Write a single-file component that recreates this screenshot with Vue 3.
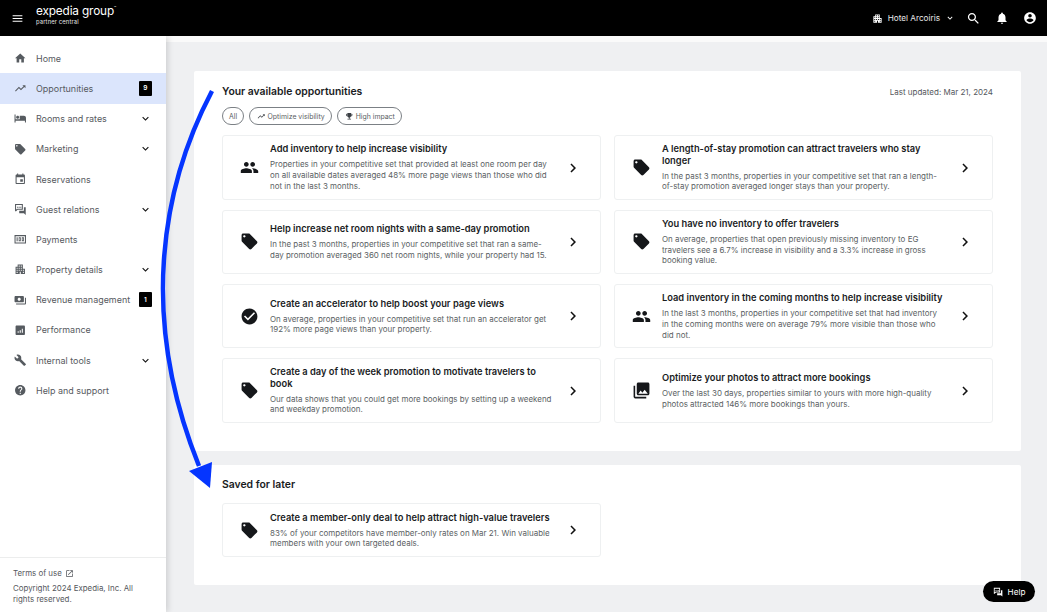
<template>
  <div class="page">
    <header class="topbar">
      <svg class="menu-icon" viewBox="0 0 24 24"><path :d="icons.menu" /></svg>
      <div class="logo">
        <div class="logo-main">expedia group<sup>™</sup></div>
        <div class="logo-sub">partner central</div>
      </div>
      <div class="top-right">
        <svg class="hotel-icon" viewBox="0 0 24 24"><path :d="icons.building" /></svg>
        <span class="hotel-name">Hotel Arcoiris</span>
        <svg class="hotel-caret" viewBox="0 0 24 24"><path :d="icons.expand" /></svg>
        <svg class="top-icon search" viewBox="0 0 24 24"><path :d="icons.search" /></svg>
        <svg class="top-icon bell" viewBox="0 0 24 24"><path :d="icons.bell" /></svg>
        <svg class="top-icon" viewBox="0 0 24 24"><path :d="icons.account" /></svg>
      </div>
    </header>

    <div class="body">
      <aside class="sidebar">
        <nav class="nav">
          <div v-for="item in navItems" :key="item.label" :class="['nav-item', { active: item.active }]">
            <svg class="nav-icon" viewBox="0 0 24 24"><path :d="icons[item.icon]" /></svg>
            <span class="nav-label">{{ item.label }}</span>
            <span v-if="item.badge" class="nav-badge">{{ item.badge }}</span>
            <svg v-if="item.expand" class="nav-caret" viewBox="0 0 24 24"><path :d="icons.expand" /></svg>
          </div>
        </nav>
        <div class="side-foot">
          <div class="terms">
            Terms of use
            <svg viewBox="0 0 24 24"><path :d="icons.external" /></svg>
          </div>
          <div class="copyright">Copyright 2024 Expedia, Inc. All rights reserved.</div>
        </div>
      </aside>

      <main class="main">
        <section class="panel">
          <div class="panel-head">
            <h2>Your available opportunities</h2>
            <span class="updated">Last updated: Mar 21, 2024</span>
          </div>
          <div class="pills">
            <span class="pill">All</span>
            <span class="pill">
              <svg viewBox="0 0 24 24"><path :d="icons.trend" /></svg>
              Optimize visibility
            </span>
            <span class="pill">
              <svg viewBox="0 0 24 24"><path :d="icons.trophy" /></svg>
              High impact
            </span>
          </div>
          <div class="opp-grid">
            <div v-for="opp in opportunities" :key="opp.title" class="opp">
              <svg class="opp-icon" viewBox="0 0 24 24"><path :d="icons[opp.icon]" /></svg>
              <div class="opp-text">
                <h3>{{ opp.title }}</h3>
                <p>{{ opp.text }}</p>
              </div>
              <svg class="opp-chevron" viewBox="0 0 24 24"><path :d="icons.chevron" /></svg>
            </div>
          </div>
        </section>

        <section class="panel saved">
          <h2>Saved for later</h2>
          <div class="opp-grid">
            <div class="opp">
              <svg class="opp-icon" viewBox="0 0 24 24"><path :d="icons.tag" /></svg>
              <div class="opp-text">
                <h3>Create a member-only deal to help attract high-value travelers</h3>
                <p>83% of your competitors have member-only rates on Mar 21. Win valuable members with your own targeted deals.</p>
              </div>
              <svg class="opp-chevron" viewBox="0 0 24 24"><path :d="icons.chevron" /></svg>
            </div>
          </div>
        </section>
      </main>
    </div>

    <!-- hand drawn annotation arrow over the page -->
    <svg class="arrow" viewBox="0 0 1047 612">
      <path d="M212 91 C 160 190, 140 320, 199 466" fill="none" stroke="#0535ff" stroke-width="4.5" />
      <polygon points="189,471 212,462 210,488" fill="#0535ff" />
    </svg>

    <div class="help-btn">
      <svg viewBox="0 0 24 24"><path :d="icons.guest" /></svg>
      Help
    </div>
  </div>
</template>

<script setup>
const icons = {
  menu: 'M3 18h18v-2H3v2zm0-5h18v-2H3v2zm0-7v2h18V6H3z',
  home: 'M10 20v-6h4v6h5v-8h3L12 3 2 12h3v8z',
  trend: 'M16 6l2.29 2.29-4.88 4.88-4-4L2 16.59 3.41 18l6-6 4 4 6.3-6.29L22 12V6z',
  bed: 'M7 13c1.66 0 3-1.34 3-3S8.66 7 7 7s-3 1.34-3 3 1.34 3 3 3zm12-6h-8v7H3V5H1v15h2v-3h18v3h2v-9c0-2.21-1.79-4-4-4z',
  tag: 'M21.41 11.58l-9-9C12.05 2.22 11.55 2 11 2H4c-1.1 0-2 .9-2 2v7c0 .55.22 1.05.59 1.42l9 9c.36.36.86.58 1.41.58.55 0 1.05-.22 1.41-.59l7-7c.37-.36.59-.86.59-1.41 0-.55-.23-1.06-.59-1.42zM5.5 7C4.67 7 4 6.33 4 5.5S4.67 4 5.5 4 7 4.67 7 5.5 6.33 7 5.5 7z',
  event: 'M17 12h-5v5h5v-5zM16 1v2H8V1H6v2H5c-1.11 0-1.99.9-1.99 2L3 19c0 1.1.89 2 2 2h14c1.1 0 2-.9 2-2V5c0-1.1-.9-2-2-2h-1V1h-2zm3 18H5V8h14v11z',
  guest: 'M2 2h15v11H7l-3 3H2zM4 4v8.5L6.5 11H15V4zM6 7h2v2H6zM9 7h2v2H9zM12 7h2v2h-2zM10 15h9V8h3.5v15L19 19.5h-9z',
  money: 'M1 4h22v16H1zM3 6v12h18V6zM5 8h2v8H5zM9 8h4v8H9zM10.5 10v4h1v-4zM15 8h4v8h-4zM16.5 10v4h1v-4z',
  building: 'M17 11V3H7v4H3v14h8v-4h2v4h8V11h-4zM7 19H5v-2h2v2zm0-4H5v-2h2v2zm0-4H5V9h2v2zm4 4H9v-2h2v2zm0-4H9V9h2v2zm0-4H9V5h2v2zm4 8h-2v-2h2v2zm0-4h-2V9h2v2zm0-4h-2V5h2v2zm4 12h-2v-2h2v2zm0-4h-2v-2h2v2z',
  revenue: 'M19 14V6c0-1.1-.9-2-2-2H3c-1.1 0-2 .9-2 2v8c0 1.1.9 2 2 2h14c1.1 0 2-.9 2-2zm-9-1c-1.66 0-3-1.34-3-3s1.34-3 3-3 3 1.34 3 3-1.34 3-3 3zm13-6v11c0 1.1-.9 2-2 2H4v-2h17V7h2z',
  chart: 'M19 3H5c-1.1 0-2 .9-2 2v14c0 1.1.9 2 2 2h14c1.1 0 2-.9 2-2V5c0-1.1-.9-2-2-2zM9 17H7v-3h2v3zm4 0h-2v-5h2v5zm4 0h-2V9h2v8z',
  wrench: 'M22.7 19l-9.1-9.1c.9-2.3.4-5-1.5-6.9-2-2-5-2.4-7.4-1.3L9 6 6 9 1.6 4.7C.4 7.1.9 10.1 2.9 12.1c1.9 1.9 4.6 2.4 6.9 1.5l9.1 9.1c.4.4 1 .4 1.4 0l2.3-2.3c.5-.4.5-1.1.1-1.4z',
  help: 'M12 2C6.48 2 2 6.48 2 12s4.48 10 10 10 10-4.48 10-10S17.52 2 12 2zm1 17h-2v-2h2v2zm2.07-7.75l-.9.92C13.45 12.9 13 13.5 13 15h-2v-.5c0-1.1.45-2.1 1.17-2.83l1.24-1.26c.37-.36.59-.86.59-1.41 0-1.1-.9-2-2-2s-2 .9-2 2H8c0-2.21 1.79-4 4-4s4 1.79 4 4c0 .88-.36 1.68-.93 2.25z',
  expand: 'M16.59 8.59L12 13.17 7.41 8.59 6 10l6 6 6-6z',
  chevron: 'M10 6L8.59 7.41 13.17 12l-4.58 4.59L10 18l6-6z',
  people: 'M16 11c1.66 0 2.99-1.34 2.99-3S17.66 5 16 5c-1.66 0-3 1.34-3 3s1.34 3 3 3zm-8 0c1.66 0 2.99-1.34 2.99-3S9.66 5 8 5C6.34 5 5 6.34 5 8s1.34 3 3 3zm0 2c-2.33 0-7 1.17-7 3.5V19h14v-2.5c0-2.33-4.67-3.5-7-3.5zm8 0c-.29 0-.62.02-.97.05 1.16.84 1.97 1.97 1.97 3.45V19h6v-2.5c0-2.33-4.67-3.5-7-3.5z',
  check: 'M12 2C6.48 2 2 6.48 2 12s4.48 10 10 10 10-4.48 10-10S17.52 2 12 2zm-2 15l-5-5 1.41-1.41L10 14.17l7.59-7.59L19 8l-9 9z',
  photos: 'M22 16V4c0-1.1-.9-2-2-2H8c-1.1 0-2 .9-2 2v12c0 1.1.9 2 2 2h12c1.1 0 2-.9 2-2zm-11-4l2.03 2.71L16 11l4 5H8l3-4zM2 6v14c0 1.1.9 2 2 2h14v-2H4V6H2z',
  search: 'M15.5 14h-.79l-.28-.27C15.41 12.59 16 11.11 16 9.5 16 5.91 13.09 3 9.5 3S3 5.91 3 9.5 5.91 16 9.5 16c1.61 0 3.09-.59 4.23-1.57l.27.28v.79l5 4.99L20.49 19l-4.99-5zm-6 0C7.01 14 5 11.99 5 9.5S7.01 5 9.5 5 14 7.01 14 9.5 11.99 14 9.5 14z',
  bell: 'M12 22c1.1 0 2-.9 2-2h-4c0 1.1.89 2 2 2zm6-6v-5c0-3.07-1.64-5.64-4.5-6.32V4c0-.83-.67-1.5-1.5-1.5s-1.5.67-1.5 1.5v.68C7.63 5.36 6 7.92 6 11v5l-2 2v1h16v-1l-2-2z',
  account: 'M12 2C6.48 2 2 6.48 2 12s4.48 10 10 10 10-4.48 10-10S17.52 2 12 2zm0 3c1.66 0 3 1.34 3 3s-1.34 3-3 3-3-1.34-3-3 1.34-3 3-3zm0 14.2c-2.5 0-4.71-1.28-6-3.22.03-1.99 4-3.08 6-3.08 1.99 0 5.97 1.09 6 3.08-1.29 1.94-3.5 3.22-6 3.22z',
  trophy: 'M19 5h-2V3H7v2H5c-1.1 0-2 .9-2 2v1c0 2.55 1.92 4.63 4.39 4.94.63 1.5 1.98 2.63 3.61 2.96V19H7v2h10v-2h-4v-3.1c1.63-.33 2.98-1.46 3.61-2.96C19.08 12.63 21 10.55 21 8V7c0-1.1-.9-2-2-2zM5 8V7h2v3.82C5.84 10.4 5 9.3 5 8zm14 0c0 1.3-.84 2.4-2 2.82V7h2v1z',
  external: 'M19 19H5V5h7V3H5c-1.11 0-2 .9-2 2v14c0 1.1.89 2 2 2h14c1.1 0 2-.89 2-2v-7h-2v7zM14 3v2h3.59l-9.83 9.83 1.41 1.41L19 6.41V10h2V3h-7z'
}

const navItems = [
  { label: 'Home', icon: 'home' },
  { label: 'Opportunities', icon: 'trend', active: true, badge: '9' },
  { label: 'Rooms and rates', icon: 'bed', expand: true },
  { label: 'Marketing', icon: 'tag', expand: true },
  { label: 'Reservations', icon: 'event' },
  { label: 'Guest relations', icon: 'guest', expand: true },
  { label: 'Payments', icon: 'money' },
  { label: 'Property details', icon: 'building', expand: true },
  { label: 'Revenue management', icon: 'revenue', badge: '1' },
  { label: 'Performance', icon: 'chart' },
  { label: 'Internal tools', icon: 'wrench', expand: true },
  { label: 'Help and support', icon: 'help' }
]

const opportunities = [
  {
    icon: 'people',
    title: 'Add inventory to help increase visibility',
    text: 'Properties in your competitive set that provided at least one room per day on all available dates averaged 48% more page views than those who did not in the last 3 months.'
  },
  {
    icon: 'tag',
    title: 'A length-of-stay promotion can attract travelers who stay longer',
    text: 'In the past 3 months, properties in your competitive set that ran a length-of-stay promotion averaged longer stays than your property.'
  },
  {
    icon: 'tag',
    title: 'Help increase net room nights with a same-day promotion',
    text: 'In the past 3 months, properties in your competitive set that ran a same-day promotion averaged 360 net room nights, while your property had 15.'
  },
  {
    icon: 'tag',
    title: 'You have no inventory to offer travelers',
    text: 'On average, properties that open previously missing inventory to EG travelers see a 6.7% increase in visibility and a 3.3% increase in gross booking value.'
  },
  {
    icon: 'check',
    title: 'Create an accelerator to help boost your page views',
    text: 'On average, properties in your competitive set that run an accelerator get 192% more page views than your property.'
  },
  {
    icon: 'people',
    title: 'Load inventory in the coming months to help increase visibility',
    text: 'In the last 3 months, properties in your competitive set that had inventory in the coming months were on average 79% more visible than those who did not.'
  },
  {
    icon: 'tag',
    title: 'Create a day of the week promotion to motivate travelers to book',
    text: 'Our data shows that you could get more bookings by setting up a weekend and weekday promotion.'
  },
  {
    icon: 'photos',
    title: 'Optimize your photos to attract more bookings',
    text: 'Over the last 30 days, properties similar to yours with more high-quality photos attracted 146% more bookings than yours.'
  }
]
</script>

<style>
html, body { margin: 0; padding: 0; height: 100%; overflow: hidden; }
</style>

<style scoped>
.page {
  position: relative;
  width: 1047px;
  height: 612px;
  overflow: hidden;
  display: flex;
  flex-direction: column;
  background: #eff0f2;
  font-family: Inter, "Liberation Sans", sans-serif;
  color: #1a1c1e;
}
svg { fill: currentColor; display: block; flex: none; }

/* top bar */
.topbar {
  height: 36px;
  flex: none;
  background: #000;
  color: #fff;
  display: flex;
  align-items: center;
  padding: 0 10px 0 11px;
}
.menu-icon { width: 13px; height: 13px; margin-right: 12px; }
.logo { margin-top: -7px; }
.logo-main {
  font-size: 11.8px;
  line-height: 13px;
  letter-spacing: -0.15px;
  white-space: nowrap;
}
.logo-main sup { font-size: 3.5px; vertical-align: 6px; line-height: 0; }
.logo-sub {
  font-size: 5.8px;
  line-height: 7px;
  letter-spacing: 0.15px;
  color: #e4e4e4;
}
.top-right { margin-left: auto; display: flex; align-items: center; }
.hotel-icon { width: 11px; height: 11px; margin-right: 4.5px; }
.hotel-name { font-size: 8.2px; color: #e8e8e8; }
.hotel-caret { width: 10px; height: 10px; margin-left: 5px; }
.top-icon { width: 14px; height: 14px; }
.top-icon.search { width: 15px; height: 15px; margin-left: 11px; }
.top-icon.bell { margin: 0 14px; }

/* sidebar */
.body { flex: 1; display: flex; min-height: 0; }
.sidebar {
  width: 166px;
  flex: none;
  background: #fff;
  display: flex;
  flex-direction: column;
  box-shadow: 2px 0 6px rgba(0, 0, 0, 0.14);
  position: relative;
  z-index: 1;
}
.nav { padding-top: 7.2px; }
.nav-item {
  height: 30.2px;
  display: flex;
  align-items: center;
  padding: 0 14px;
  font-size: 8.95px;
  color: #56595e;
}
.nav-item.active { background: #dbe5fc; }
.nav-icon { width: 12.5px; height: 12.5px; margin-right: 9.5px; color: #565b60; }
.nav-label { flex: 1; white-space: nowrap; }
.nav-badge {
  width: 13.5px;
  height: 15px;
  background: #000;
  color: #fff;
  border-radius: 1px;
  font-size: 6.5px;
  font-weight: 600;
  display: flex;
  align-items: center;
  justify-content: center;
}
.nav-caret { width: 13px; height: 13px; color: #111; }
.side-foot {
  margin-top: auto;
  border-top: 1px solid #eceded;
  padding: 10px 13px 7px;
  font-size: 7.9px;
  line-height: 11px;
  color: #55585d;
}
.terms { display: flex; align-items: center; gap: 3px; margin-bottom: 4px; }
.terms svg { width: 9px; height: 9px; }

/* main column */
.main {
  flex: 1;
  min-width: 0;
  padding: 35px 26px 0 28px;
  background: linear-gradient(#fafafa, #fafafa) top / 100% 6px no-repeat, #eff0f2;
}
.panel {
  background: #fff;
  border-radius: 2px;
  padding: 14px 28px 28.15px;
}
.panel h2 {
  margin: 0;
  font-size: 10.4px;
  line-height: 13px;
  font-weight: 600;
  color: #1a1c1e;
}
.panel-head {
  display: flex;
  justify-content: space-between;
  align-items: flex-end;
}
.updated { font-size: 8px; color: #55585d; line-height: 11px; }
.pills { display: flex; gap: 5px; margin: 9px 0 10.3px; }
.pill {
  height: 18px;
  box-sizing: border-box;
  border: 1px solid #7b8085;
  border-radius: 9px;
  padding: 0 6.5px;
  display: flex;
  align-items: center;
  gap: 2.5px;
  font-size: 6.9px;
  color: #5a5e63;
}
.pill:first-child { padding: 0 6px; }
.pill svg { width: 8.5px; height: 8.5px; color: #3b3f44; }
.opp-grid {
  display: grid;
  grid-template-columns: 379px 379px;
  column-gap: 13px;
  row-gap: 9.85px;
}
.opp {
  min-height: 64.5px;
  box-sizing: border-box;
  border: 1px solid #eef0f1;
  border-radius: 3px;
  display: flex;
  align-items: center;
  padding: 3px 18px 3px 16.5px;
}
.opp-icon { width: 19px; height: 19px; margin-right: 11.5px; color: #15171a; }
.opp-text { flex: 1; min-width: 0; padding-right: 8px; }
.opp-text h3 {
  margin: 0 0 4.5px;
  font-size: 9.32px;
  line-height: 11.5px;
  font-weight: 600;
  color: #1a1c1e;
}
.opp-text p {
  margin: 0;
  font-size: 7.98px;
  line-height: 10.7px;
  color: #5b5f64;
}
.opp-chevron { width: 18px; height: 18px; color: #111; margin-left: 4px; }
.saved { margin-top: 14px; padding-top: 13.5px; padding-bottom: 27.7px; }
.saved h2 { margin-bottom: 11.8px; }
.saved .opp { min-height: 54px; }

/* annotation + floating help */
.arrow {
  position: absolute;
  left: 0;
  top: 0;
  width: 1047px;
  height: 612px;
  z-index: 2;
  pointer-events: none;
}
.help-btn {
  position: absolute;
  right: 12px;
  bottom: 10px;
  width: 52px;
  height: 21px;
  box-sizing: border-box;
  background: #000;
  color: #fff;
  border-radius: 11px;
  z-index: 3;
  display: flex;
  align-items: center;
  justify-content: center;
  gap: 5px;
  font-size: 8.2px;
}
.help-btn svg { width: 10px; height: 10px; }
</style>
